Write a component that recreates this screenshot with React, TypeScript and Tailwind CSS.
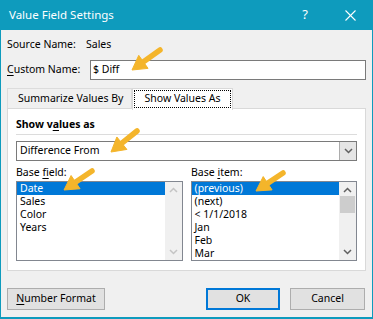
import React from "react";

function Arrow({ x1, y1, x2, y2 }: { x1: number; y1: number; x2: number; y2: number }) {
  const dx = x2 - x1;
  const dy = y2 - y1;
  const L = Math.sqrt(dx * dx + dy * dy);
  const ux = dx / L;
  const uy = dy / L;
  const nx = -uy;
  const ny = ux;
  const h = 14;
  const w = 8;
  const bx = x2 - ux * h;
  const by = y2 - uy * h;
  const pts = `${x2},${y2} ${bx + nx * w},${by + ny * w} ${bx - nx * w},${by - ny * w}`;
  return (
    <g>
      <line x1={x1} y1={y1} x2={bx + ux * 2} y2={by + uy * 2} stroke="#f4b52b" strokeWidth={5.5} strokeLinecap="round" />
      <polygon points={pts} fill="#f4b52b" stroke="#f4b52b" strokeWidth={1} strokeLinejoin="round" />
    </g>
  );
}

function Chevron({ up, color }: { up?: boolean; color: string }) {
  return (
    <svg width="9" height="6" viewBox="0 0 9 6">
      {up ? (
        <polyline points="1,5 4.5,1.5 8,5" fill="none" stroke={color} strokeWidth="1.5" />
      ) : (
        <polyline points="1,1 4.5,4.5 8,1" fill="none" stroke={color} strokeWidth="1.5" />
      )}
    </svg>
  );
}

function ListBox({
  items,
  enabled,
}: {
  items: string[];
  enabled: boolean;
}) {
  const c = enabled ? "#606060" : "#c4c4c4";
  return (
    <div className="w-[167px] h-[80px] border border-[#828790] bg-white flex">
      <div className="flex-1 flex flex-col overflow-hidden">
        {items.map((it, i) => (
          <div
            key={it}
            className={
              "h-[13px] leading-[13px] pl-[3px] whitespace-nowrap " +
              (i === 0 ? "bg-[#0078d7] text-white" : "text-black")
            }
          >
            {it}
          </div>
        ))}
      </div>
      <div className="w-[17px] bg-[#f0f0f0] flex flex-col items-center justify-between py-[5px]">
        <Chevron up color={c} />
        {enabled && <div className="w-[15px] h-[17px] bg-[#cdcdcd] mt-[3px]" />}
        <div className="flex-1" />
        <Chevron color={c} />
      </div>
    </div>
  );
}

export default function App() {
  return (
    <div className="relative w-[373px] h-[319px] flex flex-col bg-[#0e9bbd] text-[10.5px] text-black font-['Noto_Sans',sans-serif] overflow-hidden">
      <div className="h-[30px] flex items-center pl-[9px] pr-[17px] text-white shrink-0">
        <span className="text-[11.5px] flex-1">Value Field Settings</span>
        <span className="text-[13px] mr-[37px]">?</span>
        <svg width="11" height="11" viewBox="0 0 11 11">
          <line x1="0.5" y1="0.5" x2="10.5" y2="10.5" stroke="white" strokeWidth="1.1" />
          <line x1="10.5" y1="0.5" x2="0.5" y2="10.5" stroke="white" strokeWidth="1.1" />
        </svg>
      </div>
      <div className="flex-1 mx-px mb-[2px] bg-[#f0f0f0] flex flex-col pl-[6px] pt-[7px]">
        <div className="h-[16px] flex items-center">
          <span className="w-[79px]">Source Name:</span>
          <span>Sales</span>
        </div>
        <div className="h-[20px] mt-[7px] flex items-center">
          <span className="w-[83px]">
            <span className="underline underline-offset-[2px]">C</span>ustom Name:
          </span>
          <div className="w-[276px] h-[20px] border border-[#7a7a7a] bg-white flex items-center pl-[2px]">
            $ Diff
          </div>
        </div>
        <div className="mt-[7px] h-[22px] flex items-end relative z-10">
          <div className="w-[125px] h-[20px] flex items-center pl-[10px] border border-b-0 border-[#dcdcdc] bg-[#f0f0f0] mb-px">
            Summarize Values By
          </div>
          <div className="w-[101px] h-[22px] bg-white border border-b-0 border-[#d9d9d9] -mb-px p-px">
            <div className="h-[18px] border border-dotted border-black flex items-center justify-center">
              Show Values As
            </div>
          </div>
        </div>
        <div className="w-[359px] h-[163px] -mt-px border border-[#d9d9d9] bg-white flex flex-col px-[8px] pt-[9px]">
          <div className="h-[14px] flex items-center font-bold">
            Show v<span className="underline underline-offset-[2px]">a</span>lues as
          </div>
          <div className="h-px bg-[#dcdcdc] mt-[2px] w-[341px]" />
          <div className="mt-[6px] w-[341px] h-[20px] border border-[#7a7a7a] bg-white flex">
            <div className="flex-1 flex items-center pl-[3px]">Difference From</div>
            <div className="w-[17px] bg-[#e5e5e5] border-l border-[#acacac] flex items-center justify-center">
              <Chevron color="#606060" />
            </div>
          </div>
          <div className="mt-[4px] h-[15px] flex items-center">
            <span className="w-[175px]">
              Base <span className="underline underline-offset-[2px]">f</span>ield:
            </span>
            <span>
              Base <span className="underline underline-offset-[2px]">i</span>tem:
            </span>
          </div>
          <div className="mt-px flex gap-[8px]">
            <ListBox items={["Date", "Sales", "Color", "Years"]} enabled={false} />
            <ListBox items={["(previous)", "(next)", "< 1/1/2018", "Jan", "Feb", "Mar"]} enabled />
          </div>
        </div>
        <div className="mt-[17px] flex items-center pr-[7px]">
          <div className="w-[98px] h-[22px] bg-[#e1e1e1] border border-[#adadad] flex items-center justify-center">
            <span>
              <span className="underline underline-offset-[2px]">N</span>umber Format
            </span>
          </div>
          <div className="flex-1" />
          <div className="w-[74px] h-[22px] bg-[#e1e1e1] border-2 border-[#0078d7] flex items-center justify-center">
            OK
          </div>
          <div className="w-[75px] h-[22px] ml-[10px] bg-[#e1e1e1] border border-[#adadad] flex items-center justify-center">
            Cancel
          </div>
        </div>
      </div>
      <svg className="absolute left-0 top-0 pointer-events-none" width="373" height="319" viewBox="0 0 373 319">
        <Arrow x1={160} y1={50} x2={132} y2={70} />
        <Arrow x1={137} y1={131} x2={111} y2={152} />
        <Arrow x1={92} y1={171} x2={64} y2={190} />
        <Arrow x1={283} y1={173} x2={256} y2={191} />
      </svg>
    </div>
  );
}
